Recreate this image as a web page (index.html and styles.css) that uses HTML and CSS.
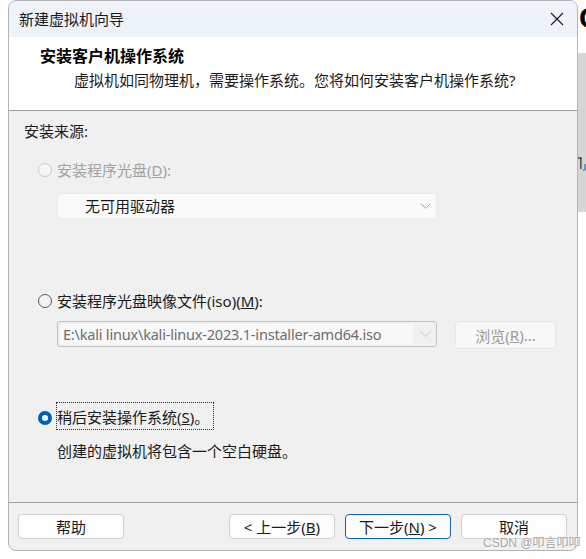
FILE: index.html
```html
<!DOCTYPE html>
<html lang="zh-CN">
<head>
<meta charset="utf-8">
<title>新建虚拟机向导</title>
<link rel="stylesheet" href="styles.css">
</head>
<body>
<div class="page">
  <div class="window">
    <div class="titlebar">
      <span class="title">新建虚拟机向导</span>
      <svg class="close" width="14" height="14" viewBox="0 0 14 14"><path d="M1 1L13 13M13 1L1 13" stroke="#1a1a1a" stroke-width="1.1" fill="none"/></svg>
    </div>
    <div class="header">
      <div class="h-title">安装客户机操作系统</div>
      <div class="h-sub">虚拟机如同物理机，需要操作系统。您将如何安装客户机操作系统?</div>
    </div>
    <div class="content">
      <div class="source">安装来源:</div>

      <div class="radio-row disabled r1">
        <span class="radio off-disabled"></span>
        <span class="label">安装程序光盘(<u>D</u>):</span>
      </div>
      <div class="combo combo-disabled">
        <span class="combo-text">无可用驱动器</span>
        <svg class="chev" width="11" height="6" viewBox="0 0 11 6"><path d="M0.5 0.5L5.5 5.5L10.5 0.5" stroke="#a8a8a8" fill="none"/></svg>
      </div>

      <div class="radio-row r2">
        <span class="radio off"></span>
        <span class="label">安装程序光盘映像文件(iso)(<u>M</u>):</span>
      </div>
      <div class="iso-row">
        <div class="combo combo-iso">
          <span class="iso-field">E:\kali linux\kali-linux-2023.1-installer-amd64.iso</span>
          <svg class="chev" width="11" height="6" viewBox="0 0 11 6"><path d="M0.5 0.5L5.5 5.5L10.5 0.5" stroke="#c4c4c4" fill="none"/></svg>
        </div>
        <div class="browse">浏览(<u>R</u>)...</div>
      </div>

      <div class="radio-row r3">
        <span class="radio on"></span>
        <span class="label focus">稍后安装操作系统(<u>S</u>)。</span>
      </div>
      <div class="desc">创建的虚拟机将包含一个空白硬盘。</div>
    </div>
    <div class="footer">
      <div class="btn">帮助</div>
      <div class="btn-group">
        <div class="btn">&lt; 上一步(<u>B</u>)</div>
        <div class="btn primary">下一步(<u>N</u>) &gt;</div>
        <div class="btn">取消</div>
      </div>
    </div>
  </div>
  <div class="side">
    <div class="side-letter">C</div>
    <div class="side-panel">
      <svg class="side-icon" width="8" height="14" viewBox="0 0 8 14"><path d="M0 1H3V12" stroke="#000" stroke-width="1.2" fill="none"/><path d="M3.6 2V12" stroke="#d08020" stroke-width="1" fill="none"/><path d="M4.5 13H7V7" stroke="#1e6fd0" stroke-width="1.2" fill="none"/></svg>
    </div>
  </div>
</div>
<div class="watermark">CSDN @叩言叩叩</div>
</body>
</html>
```
FILE: styles.css
```css
html, body {
  margin: 0;
  padding: 0;
  background: #ffffff;
  overflow: hidden;
}
body {
  width: 586px;
  height: 559px;
  font-family: "Noto Sans", "Noto Sans CJK SC", sans-serif;
  font-size: 15px;
  color: #1a1a1a;
  position: relative;
}
.page {
  display: flex;
  align-items: flex-start;
  padding-left: 8px;
}
.window {
  width: 568px;
  height: 549px;
  border: 1px solid #b4b4b4;
  border-radius: 8px;
  overflow: hidden;
  display: flex;
  flex-direction: column;
  background: #f0f0f0;
}
.titlebar {
  height: 36px;
  flex: none;
  background: #eef3f9;
  display: flex;
  align-items: center;
  justify-content: space-between;
  padding: 0 13px 0 10px;
}
.title {
  font-size: 15px;
  line-height: 20px;
  color: #1a1a1a;
}
.close {
  display: block;
}
.header {
  flex: none;
  background: #ffffff;
  border-bottom: 1px solid #a0a0a0;
  padding-top: 8px;
  box-sizing: border-box;
  height: 74px;
}
.h-title {
  font-weight: bold;
  font-size: 16px;
  line-height: 22px;
  padding-left: 31px;
  color: #000;
}
.h-sub {
  margin-top: 2px;
  line-height: 22px;
  padding-left: 65px;
  color: #1a1a1a;
}
.content {
  flex: 1;
  display: flex;
  flex-direction: column;
  align-items: flex-start;
  padding-top: 10px;
  padding-left: 15px;
}
.source {
  line-height: 20px;
}
.radio-row {
  display: flex;
  align-items: center;
  margin-left: 14px;
  line-height: 20px;
  gap: 5px;
}
.r1 { margin-top: 19px; }
.r2 { margin-top: 72px; }
.r3 { margin-top: 54px; }
.radio-row.disabled .label {
  color: #a2a2a2;
}
.radio {
  width: 14px;
  height: 14px;
  box-sizing: border-box;
  border-radius: 50%;
  flex: none;
}
.radio.off-disabled {
  border: 1px solid #cacaca;
  background: #f6f6f6;
}
.radio.off {
  border: 1px solid #5a5a5a;
  background: #f3f3f3;
}
.radio.on {
  border: 4px solid #005fb8;
  background: #ffffff;
  margin-top: 4px;
}
.label.focus {
  outline: 1px dotted #333;
  outline-offset: 0;
  line-height: 24px;
  padding-top: 2px;
  padding-right: 4px;
}
.combo {
  margin-left: 33px;
  width: 380px;
  height: 26px;
  box-sizing: border-box;
  border-radius: 3px;
  display: flex;
  align-items: center;
  justify-content: space-between;
  padding-right: 5px;
}
.combo-disabled {
  margin-top: 13px;
  background: #fafafa;
  border: 1px solid #ececec;
  padding-left: 27px;
}
.combo-text {
  line-height: 20px;
  color: #1a1a1a;
}
.iso-row {
  display: flex;
  align-items: flex-start;
  margin-top: 10px;
  margin-left: 33px;
  gap: 18px;
}
.combo-iso {
  margin-left: 0;
  background: #f0f0f0;
  border: 1px solid #c2c2c2;
  padding-left: 2px;
}
.iso-field {
  width: 353px;
  height: 20px;
  line-height: 20px;
  background: #f8f8f8;
  color: #6e6e6e;
  padding-left: 3px;
  box-sizing: border-box;
  white-space: nowrap;
  overflow: hidden;
  font-size: 14.5px;
  letter-spacing: -0.2px;
}
.browse {
  width: 101px;
  height: 28px;
  box-sizing: border-box;
  border: 1px solid #e6e6e6;
  border-radius: 4px;
  background: #f8f8f8;
  color: #9a9a9a;
  display: flex;
  align-items: center;
  justify-content: center;
}
.desc {
  margin-top: 12px;
  margin-left: 33px;
  line-height: 20px;
}
.footer {
  flex: none;
  height: 48px;
  box-sizing: border-box;
  border-top: 1px solid #a0a0a0;
  padding: 11px 10px 0 9px;
  display: flex;
  justify-content: space-between;
  align-items: flex-start;
}
.btn-group {
  display: flex;
  gap: 10px;
}
.btn {
  width: 106px;
  height: 25px;
  box-sizing: border-box;
  border: 1px solid #d0d0d0;
  border-radius: 4px;
  background: #fdfdfd;
  display: flex;
  align-items: center;
  justify-content: center;
  line-height: 20px;
  color: #1a1a1a;
}
.btn.primary {
  border-color: #0a64bf;
}
.side {
  flex: 1;
  overflow: hidden;
  height: 559px;
}
.side-letter {
  font-family: "Liberation Sans", sans-serif;
  font-weight: bold;
  font-size: 30px;
  line-height: 36px;
  height: 53px;
  margin-left: 1px;
  color: #000;
}
.side-panel {
  height: 159px;
  background: #d6d6d6;
  padding-top: 104px;
  box-sizing: border-box;
}
.side-icon {
  display: block;
}
.watermark {
  position: absolute;
  left: 483px;
  top: 536px;
  font-family: "Liberation Sans", "Noto Sans CJK SC", sans-serif;
  font-size: 12px;
  line-height: 15px;
  color: #a4a4a4;
  text-shadow: 0 0 2px #fff, 0 0 2px #fff;
  white-space: nowrap;
}
```
